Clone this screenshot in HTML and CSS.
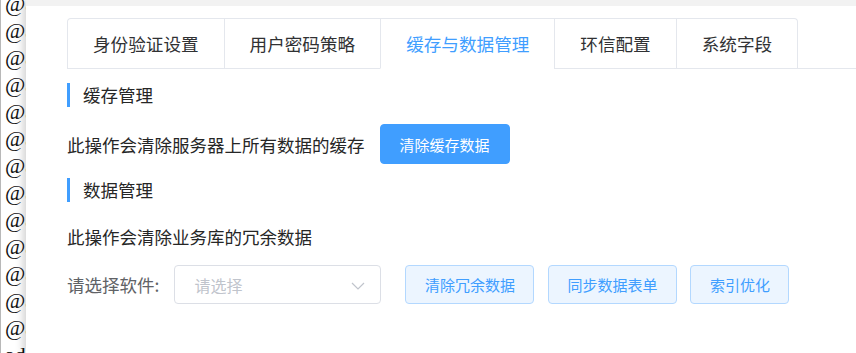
FILE: index.html
```html
<!DOCTYPE html>
<html lang="zh-CN">

<head>
    <meta charset="UTF-8">
    <meta name="viewport" content="width=device-width, initial-scale=1.0">
    <title>系统设置</title>
    <link rel="stylesheet" href="styles.css">
</head>

<body>
    <div class="page">
        <!-- list behind the drawer -->
        <div class="behind">
            <div class="line">@<span>a</span></div>
            <div class="line">@<span>a</span></div>
            <div class="line">@<span>a</span></div>
            <div class="line">@<span>a</span></div>
            <div class="line">@<span>a</span></div>
            <div class="line">@<span>a</span></div>
            <div class="line">@<span>a</span></div>
            <div class="line">@<span>a</span></div>
            <div class="line">@<span>a</span></div>
            <div class="line">@<span>a</span></div>
            <div class="line">@<span>a</span></div>
            <div class="line">@<span>a</span></div>
            <div class="line">@<span>a</span></div>
            <div class="line">ad</div>
        </div>

        <div class="drawer">
            <div class="drawer-top"></div>
            <div class="content">
                <div class="tabs-header">
                    <div class="tabs-nav">
                        <div class="tab">身份验证设置</div>
                        <div class="tab">用户密码策略</div>
                        <div class="tab active">缓存与数据管理</div>
                        <div class="tab">环信配置</div>
                        <div class="tab">系统字段</div>
                    </div>
                </div>

                <div class="pane">
                    <div class="section-title">缓存管理</div>
                    <div class="row first-row">
                        <span class="desc">此操作会清除服务器上所有数据的缓存</span>
                        <button class="btn btn-primary">清除缓存数据</button>
                    </div>

                    <div class="section-title second">数据管理</div>
                    <div class="desc-line">此操作会清除业务库的冗余数据</div>
                    <div class="row form-row">
                        <label class="form-label">请选择软件:</label>
                        <div class="select">
                            <span class="placeholder">请选择</span>
                            <svg class="arrow" width="14" height="8" viewBox="0 0 14 8">
                                <path d="M1 1 L7 7 L13 1" fill="none" stroke="#c0c4cc" stroke-width="1.2" />
                            </svg>
                        </div>
                        <div class="actions">
                            <button class="btn btn-plain">清除冗余数据</button>
                            <button class="btn btn-plain">同步数据表单</button>
                            <button class="btn btn-plain">索引优化</button>
                        </div>
                    </div>
                </div>
            </div>
        </div>
    </div>
</body>

</html>
```

FILE: styles.css
```css
html,
body {
    margin: 0;
    padding: 0;
    height: 100%;
    background: #fff;
}

.page {
    display: flex;
    height: 353px;
    overflow: hidden;
}

.behind {
    width: 25px;
    flex-shrink: 0;
    border-left: 1px solid #b8b8b8;
    overflow: hidden;
    font-family: "Liberation Serif", serif;
    font-size: 22px;
    color: #111;
    white-space: nowrap;
}

.line {
    height: 27px;
    line-height: 27px;
    padding-left: 4px;
}

.line:first-child {
    margin-top: -10px;
}

.line span {
    color: #b5651d;
}

.drawer {
    flex: 1;
    position: relative;
    z-index: 1;
    background: #fff;
    box-shadow: -3px 0 8px rgba(0, 0, 0, 0.18);
    font-family: "Noto Sans CJK SC", "Noto Sans", sans-serif;
}

.drawer-top {
    height: 6px;
    background: #f2f2f2;
}

.content {
    padding: 12px 0 0 41px;
}

.tabs-header {
    display: flex;
    border-bottom: 1px solid #e4e7ed;
}

.tabs-nav {
    display: flex;
    border: 1px solid #e4e7ed;
    border-bottom: none;
    border-radius: 4px 4px 0 0;
    margin-bottom: -1px;
}

.tab {
    height: 49px;
    line-height: 49px;
    padding: 0 25px;
    font-size: 17.6px;
    color: #303133;
    border-left: 1px solid #e4e7ed;
    border-bottom: 1px solid transparent;
}

.tab:first-child {
    border-left: none;
}

.tab.active {
    color: #409eff;
    border-bottom-color: #fff;
}

.pane {
    padding-top: 14px;
    color: #262626;
    font-size: 17.5px;
}

.section-title {
    height: 24px;
    line-height: 24px;
    border-left: 3px solid #409eff;
    padding-left: 13px;
}

.section-title.second {
    margin-top: 14px;
}

.row {
    display: flex;
    align-items: center;
    height: 40px;
}

.first-row {
    margin-top: 17px;
}

.desc {
    margin-right: 15px;
}

.desc-line {
    height: 40px;
    line-height: 40px;
    margin-top: 15px;
}

.form-row {
    margin-top: 8px;
    height: 39px;
}

.form-label {
    color: #606266;
    margin-right: 15px;
}

.select {
    box-sizing: border-box;
    width: 207px;
    height: 39px;
    border: 1px solid #dcdfe6;
    border-radius: 4px;
    display: flex;
    align-items: center;
    justify-content: space-between;
    padding: 0 15px 0 19px;
}

.placeholder {
    color: #c0c4cc;
    font-size: 16px;
}

.arrow {
    margin-top: 3px;
}

.actions {
    display: flex;
    gap: 13.5px;
    margin-left: 24px;
}

.btn {
    box-sizing: border-box;
    height: 40px;
    padding: 0 18.5px;
    border-radius: 4px;
    font-family: "Noto Sans CJK SC", "Noto Sans", sans-serif;
    font-size: 15px;
    cursor: pointer;
}

.btn-primary {
    background: #409eff;
    border: 1px solid #409eff;
    color: #fff;
    padding: 0 19px;
}

.btn-plain {
    height: 39px;
    background: #ecf5ff;
    border: 1px solid #b3d8ff;
    color: #409eff;
}
```
